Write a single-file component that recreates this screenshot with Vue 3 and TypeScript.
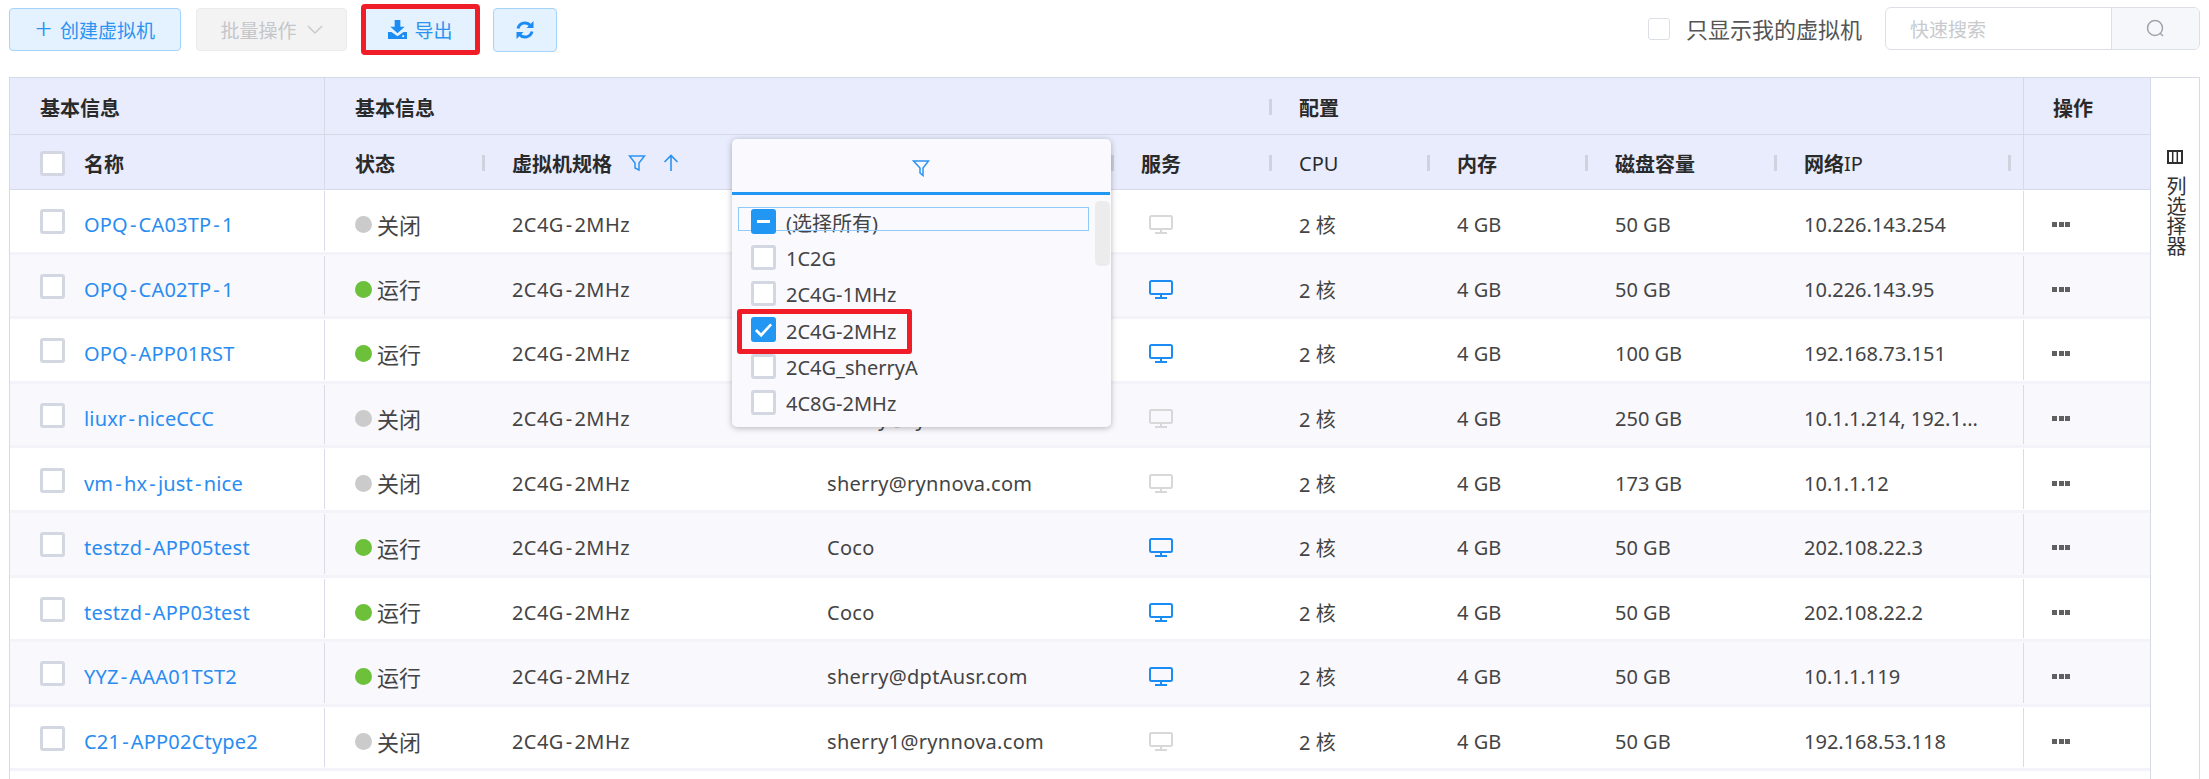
<script setup lang="ts">
interface Row {
  name: string
  on: boolean
  owner: string
  disk: string
  ip: string
}
const rows: Row[] = [
  { name: 'OPQ-CA03TP-1', on: false, owner: '', disk: '50 GB', ip: '10.226.143.254' },
  { name: 'OPQ-CA02TP-1', on: true, owner: '', disk: '50 GB', ip: '10.226.143.95' },
  { name: 'OPQ-APP01RST', on: true, owner: '', disk: '100 GB', ip: '192.168.73.151' },
  { name: 'liuxr-niceCCC', on: false, owner: 'sherry@rynnova.com', disk: '250 GB', ip: '10.1.1.214, 192.1...' },
  { name: 'vm-hx-just-nice', on: false, owner: 'sherry@rynnova.com', disk: '173 GB', ip: '10.1.1.12' },
  { name: 'testzd-APP05test', on: true, owner: 'Coco', disk: '50 GB', ip: '202.108.22.3' },
  { name: 'testzd-APP03test', on: true, owner: 'Coco', disk: '50 GB', ip: '202.108.22.2' },
  { name: 'YYZ-AAA01TST2', on: true, owner: 'sherry@dptAusr.com', disk: '50 GB', ip: '10.1.1.119' },
  { name: 'C21-APP02Ctype2', on: false, owner: 'sherry1@rynnova.com', disk: '50 GB', ip: '192.168.53.118' },
]
const options: { label: string; checked: boolean }[] = [
  { label: '1C2G', checked: false },
  { label: '2C4G-1MHz', checked: false },
  { label: '2C4G-2MHz', checked: true },
  { label: '2C4G_sherryA', checked: false },
  { label: '4C8G-2MHz', checked: false },
]
// Splits a label around its hyphens, which are set wider than the font's own.
const pieces = (s: string): string[] => s.split(/(-)/)
</script>

<template>
  <div class="page">
    <div class="toolbar">
      <button class="btn create"><span class="plus">+</span>创建虚拟机</button>
      <button class="btn batch">批量操作
        <svg class="chev" width="16" height="10" viewBox="0 0 16 10"><path d="M1 1l7 7 7-7" fill="none" stroke="#c6c8cc" stroke-width="1.4" /></svg>
      </button>
      <button class="btn export">
        <svg width="19" height="19" viewBox="0 0 20 20"><path fill="#1c8cf5" d="M7 0h6v7h4.500L10 14 2.500 7H7zM0 12.500h3.600L10 17l6.400-4.500H20V20H0z" /><rect x="15" y="16" width="2" height="2" fill="#e4f1ff" /></svg>
        导出
      </button>
      <button class="btn refresh" aria-label="刷新">
        <svg width="20" height="20" viewBox="0 0 20 20" fill="none" stroke="#1c8cf5" stroke-width="3"><path d="M3 8.500A7.200 7.200 0 0 1 15.500 5.500" /><path d="M17 11.500A7.200 7.200 0 0 1 4.500 14.500" /><path fill="#1c8cf5" stroke="none" d="M18.500 1v7h-7zM1.500 19v-7h7z" /></svg>
      </button>
      <div class="spacer"></div>
      <span class="mine-box"></span>
      <span class="mine">只显示我的虚拟机</span>
      <div class="search">
        <span class="search-input">快速搜索</span>
        <span class="search-btn">
          <svg width="20" height="20" viewBox="0 0 20 20" fill="none" stroke="#9ea3ad" stroke-width="1.500"><circle cx="9" cy="9" r="7.500" /><path d="M14.500 14.500l2.500 2.500" /></svg>
        </span>
      </div>
    </div>

    <div class="frame">
      <div class="table">
        <div class="grid group">
          <div class="cell h divided">基本信息</div>
          <div class="cell h span-b">基本信息<i class="bar"></i></div>
          <div class="cell h span-c">配置</div>
          <div class="cell h lined">操作</div>
        </div>
        <div class="grid head">
          <div class="cell h divided"><span class="box"></span><span class="name-gap">名称</span></div>
          <div class="cell h">状态<i class="bar"></i></div>
          <div class="cell h">虚拟机规格
            <svg class="hicon" width="18" height="18" viewBox="0 0 18 18" fill="none" stroke="#2b93f2" stroke-width="1.500"><path d="M1.500 2h15L11 9v7l-4-2V9z" /></svg>
            <svg class="hicon" width="18" height="18" viewBox="0 0 18 18" fill="none" stroke="#2b93f2" stroke-width="1.600"><path d="M9 17V1.500M2.500 8L9 1.500 15.500 8" /></svg>
          </div>
          <div class="cell h"><i class="bar"></i></div>
          <div class="cell h">服务<i class="bar"></i></div>
          <div class="cell h"><span class="latin">CPU</span><i class="bar"></i></div>
          <div class="cell h">内存<i class="bar"></i></div>
          <div class="cell h">磁盘容量<i class="bar"></i></div>
          <div class="cell h">网络<span class="latin">IP</span><i class="bar last"></i></div>
          <div class="cell h lined"></div>
        </div>
        <div v-for="(r, i) in rows" :key="r.name" class="grid row" :class="{ alt: i % 2 === 1 }">
          <div class="cell rule-right">
            <span class="box"></span>
            <a class="link name-gap"><template v-for="(p, k) in pieces(r.name)" :key="k"><span v-if="p === '-'" class="hy">-</span><template v-else>{{ p }}</template></template></a>
          </div>
          <div class="cell status"><i class="dot" :class="{ on: r.on }"></i>{{ r.on ? '运行' : '关闭' }}</div>
          <div class="cell spec"><template v-for="(p, k) in pieces('2C4G-2MHz')" :key="k"><span v-if="p === '-'" class="hy">-</span><template v-else>{{ p }}</template></template></div>
          <div class="cell owner">{{ r.owner }}</div>
          <div class="cell service">
            <svg width="24" height="19" viewBox="0 0 24 19" fill="none" :stroke="r.on ? '#1c8cf5' : '#d8d8d8'" stroke-width="2"><rect x="1" y="1" width="22" height="13" rx="1.500" /><path d="M12 14.500v3M6 18h12" /></svg>
          </div>
          <div class="cell">2 核</div>
          <div class="cell">4 GB</div>
          <div class="cell">{{ r.disk }}</div>
          <div class="cell">{{ r.ip }}</div>
          <div class="cell rule-left"><span class="more"><i></i><i></i><i></i></span></div>
        </div>
      </div>
      <div class="side">
        <svg width="16" height="14" viewBox="0 0 16 14" fill="none" stroke="#2e2e2e" stroke-width="2"><rect x="1" y="1" width="14" height="12" /><path d="M5.700 1v12M10.300 1v12" stroke-width="1.500" /></svg>
        <span class="side-text">列选择器</span>
      </div>

      <div class="popup">
        <div class="popup-head">
          <svg width="18" height="18" viewBox="0 0 18 18" fill="none" stroke="#2b93f2" stroke-width="1.500"><path d="M1.500 2h15L11 9v7.500L8 14V9z" /></svg>
        </div>
        <div class="popup-body">
          <div class="opt all">
            <span class="box blue"><i class="minus"></i></span>
            <span>(选择所有)</span>
          </div>
          <div v-for="o in options" :key="o.label" class="opt">
            <span class="box" :class="{ blue: o.checked }">
              <svg v-if="o.checked" width="20" height="16" viewBox="0 0 20 16" fill="none" stroke="#fff" stroke-width="2.800"><path d="M2 8l5.500 5.500L18 2" /></svg>
            </span>
            <span>{{ o.label }}</span>
          </div>
          <div class="thumb"></div>
        </div>
      </div>
      <div class="mark"></div>
    </div>
  </div>
</template>

<style>
html, body { margin: 0; background: #fff; overflow: hidden; }
</style>

<style scoped>
.page {
  width: 2209px;
  height: 779px;
  overflow: hidden;
  font-family: "Noto Sans", "Noto Sans CJK SC", sans-serif;
  font-size: 20px;
  color: #444;
  background: #fff;
}
.toolbar {
  display: flex;
  align-items: flex-start;
  height: 77px;
  box-sizing: border-box;
  padding: 8px 9px 0 9px;
}
.btn {
  box-sizing: border-box;
  height: 43px;
  display: flex;
  align-items: center;
  justify-content: center;
  border: 1px solid #a5d4fb;
  border-radius: 4px;
  background: #e4f1ff;
  color: #2b93f2;
  font: inherit;
  font-size: 19px;
  padding: 0;
}
.create { width: 172px; }
.plus { font-size: 30px; font-weight: 300; line-height: 1; margin-right: 8px; margin-top: -3px; }
.batch {
  width: 151px;
  margin-left: 15px;
  background: #f3f3f3;
  border-color: #ebebeb;
  color: #c4c6ca;
}
.chev { margin-left: 10px; }
.export {
  width: 119px;
  height: 51px;
  margin: -4px 0 0 14px;
  border: 5px solid #f01c28;
  gap: 7px;
}
.refresh { width: 64px; height: 44px; margin-left: 13px; }
.spacer { flex: 1; }
.mine-box {
  width: 22px;
  height: 22px;
  box-sizing: border-box;
  margin-top: 10px;
  border: 1px solid #dcdfe6;
  border-radius: 3px;
}
.mine { margin: 5px 23px 0 16px; font-size: 22px; line-height: 32px; color: #555; }
.search {
  display: flex;
  width: 315px;
  height: 43px;
  margin-top: -1px;
  box-sizing: border-box;
  border: 1px solid #dcdfe8;
  border-radius: 6px;
  overflow: hidden;
}
.search-input { flex: 1; padding-left: 24px; line-height: 45px; font-size: 19px; color: #c8cace; }
.search-btn {
  width: 87px;
  display: flex;
  align-items: center;
  justify-content: center;
  border-left: 1px solid #dcdfe8;
  background: #f6f7fb;
}
.frame { position: relative; display: flex; height: 702px; }
.table {
  flex: none;
  margin-left: 9px;
  width: 2141px;
  box-sizing: border-box;
  border-top: 1px solid #d6d9e6;
  border-left: 1px solid #d6d9e6;
}
.grid {
  display: grid;
  grid-template-columns: 315px 157px 315px 314px 158px 158px 158px 189px 249px 127px;
}
.group, .head { background: #e8ecfc; border-bottom: 1px solid #d6d9e6; box-sizing: border-box; }
.group { height: 57px; }
.head { height: 55px; }
.span-b { grid-column: 2 / 6; }
.span-c { grid-column: 6 / 10; }
.row { height: 64.600px; box-sizing: border-box; border-bottom: 3px solid #f3f3f9; background: #fff; }
.row.alt { background: #f8f8fd; }
.cell {
  position: relative;
  display: flex;
  align-items: center;
  box-sizing: border-box;
  padding: 8px 0 0 30px;
  white-space: nowrap;
  min-width: 0;
}
.h { font-weight: 700; color: #2a2a2a; font-size: 20px; padding-top: 2px; }
.latin { font-weight: 400; }
.divided { box-shadow: inset -1px 0 0 #d6d9e6; }
.lined { box-shadow: inset 1px 0 0 #d6d9e6; }
.rule-right::after, .rule-left::after {
  content: "";
  position: absolute;
  top: 1px;
  bottom: 1px;
  width: 1px;
  background: #d9dce8;
}
.rule-right::after { right: 0; }
.rule-left::after { left: 0; }
.rule-left { padding-left: 29px; }
.bar {
  position: absolute;
  right: -3px;
  top: 50%;
  width: 3px;
  height: 16px;
  margin-top: -7px;
  background: #d0d3dd;
}
.bar.last { right: 12px; }
.box {
  box-sizing: border-box;
  flex: none;
  width: 25px;
  height: 25px;
  display: flex;
  align-items: center;
  justify-content: center;
  background: #fff;
  border: 3px solid #d3d7e1;
  border-radius: 3px;
}
.row .box { margin-top: -6px; }
.name-gap { margin-left: 19px; }
.link { color: #2a8cf0; letter-spacing: .2px; }
.hy { padding: 0 2px; }
.spec { letter-spacing: .4px; }
.owner { letter-spacing: .3px; }
.status { font-size: 22px; padding-top: 6px; }
.service { padding-left: 38px; }
.dot {
  width: 17px;
  height: 17px;
  margin: 2px 5px 0 0;
  border-radius: 50%;
  background: #cbcbcb;
}
.dot.on { background: #6cc03a; }
.hicon { margin-left: 16px; }
.more { display: flex; gap: 1.500px; }
.more i { width: 5px; height: 5px; background: #606060; }
.side {
  flex: none;
  width: 50px;
  box-sizing: border-box;
  border: 1px solid #d6d9e6;
  border-bottom: 0;
  display: flex;
  flex-direction: column;
  align-items: center;
  padding-top: 72px;
  gap: 12px;
  background: #fff;
}
.side-text { writing-mode: vertical-rl; line-height: 20px; color: #333; }
.popup {
  position: absolute;
  left: 732px;
  top: 62px;
  width: 379px;
  height: 288px;
  box-sizing: border-box;
  background: #f9f9fe;
  border-radius: 5px;
  box-shadow: 0 1px 6px rgba(0, 0, 0, .28);
  overflow: hidden;
}
.popup-head {
  height: 56px;
  box-sizing: border-box;
  display: flex;
  align-items: center;
  justify-content: center;
  padding-top: 4px;
  border-bottom: 3px solid #2196f3;
  margin-right: 1px;
}
.popup-body { position: relative; padding-top: 12px; }
.opt {
  position: relative;
  display: flex;
  align-items: center;
  height: 36.300px;
  padding-left: 19px;
  gap: 10px;
}
.opt.all { height: 36px; }
.opt.all::before {
  content: "";
  position: absolute;
  left: 6px;
  top: 0;
  width: 351px;
  height: 24px;
  box-sizing: border-box;
  border: 1px solid #90caf9;
}
.opt .box { margin-top: -8px; position: relative; }
.opt > span:last-child { margin-top: -5px; }
.box.blue { background: #2196f3; border-color: #2196f3; }
.minus { width: 13px; height: 3px; background: #fff; }
.thumb {
  position: absolute;
  right: 1px;
  top: 6px;
  width: 15px;
  height: 65px;
  background: #ececec;
  border-radius: 5px;
}
.mark {
  position: absolute;
  left: 737px;
  top: 232px;
  width: 175px;
  height: 45px;
  box-sizing: border-box;
  border: 5px solid #f01c28;
  border-radius: 3px;
}
</style>
